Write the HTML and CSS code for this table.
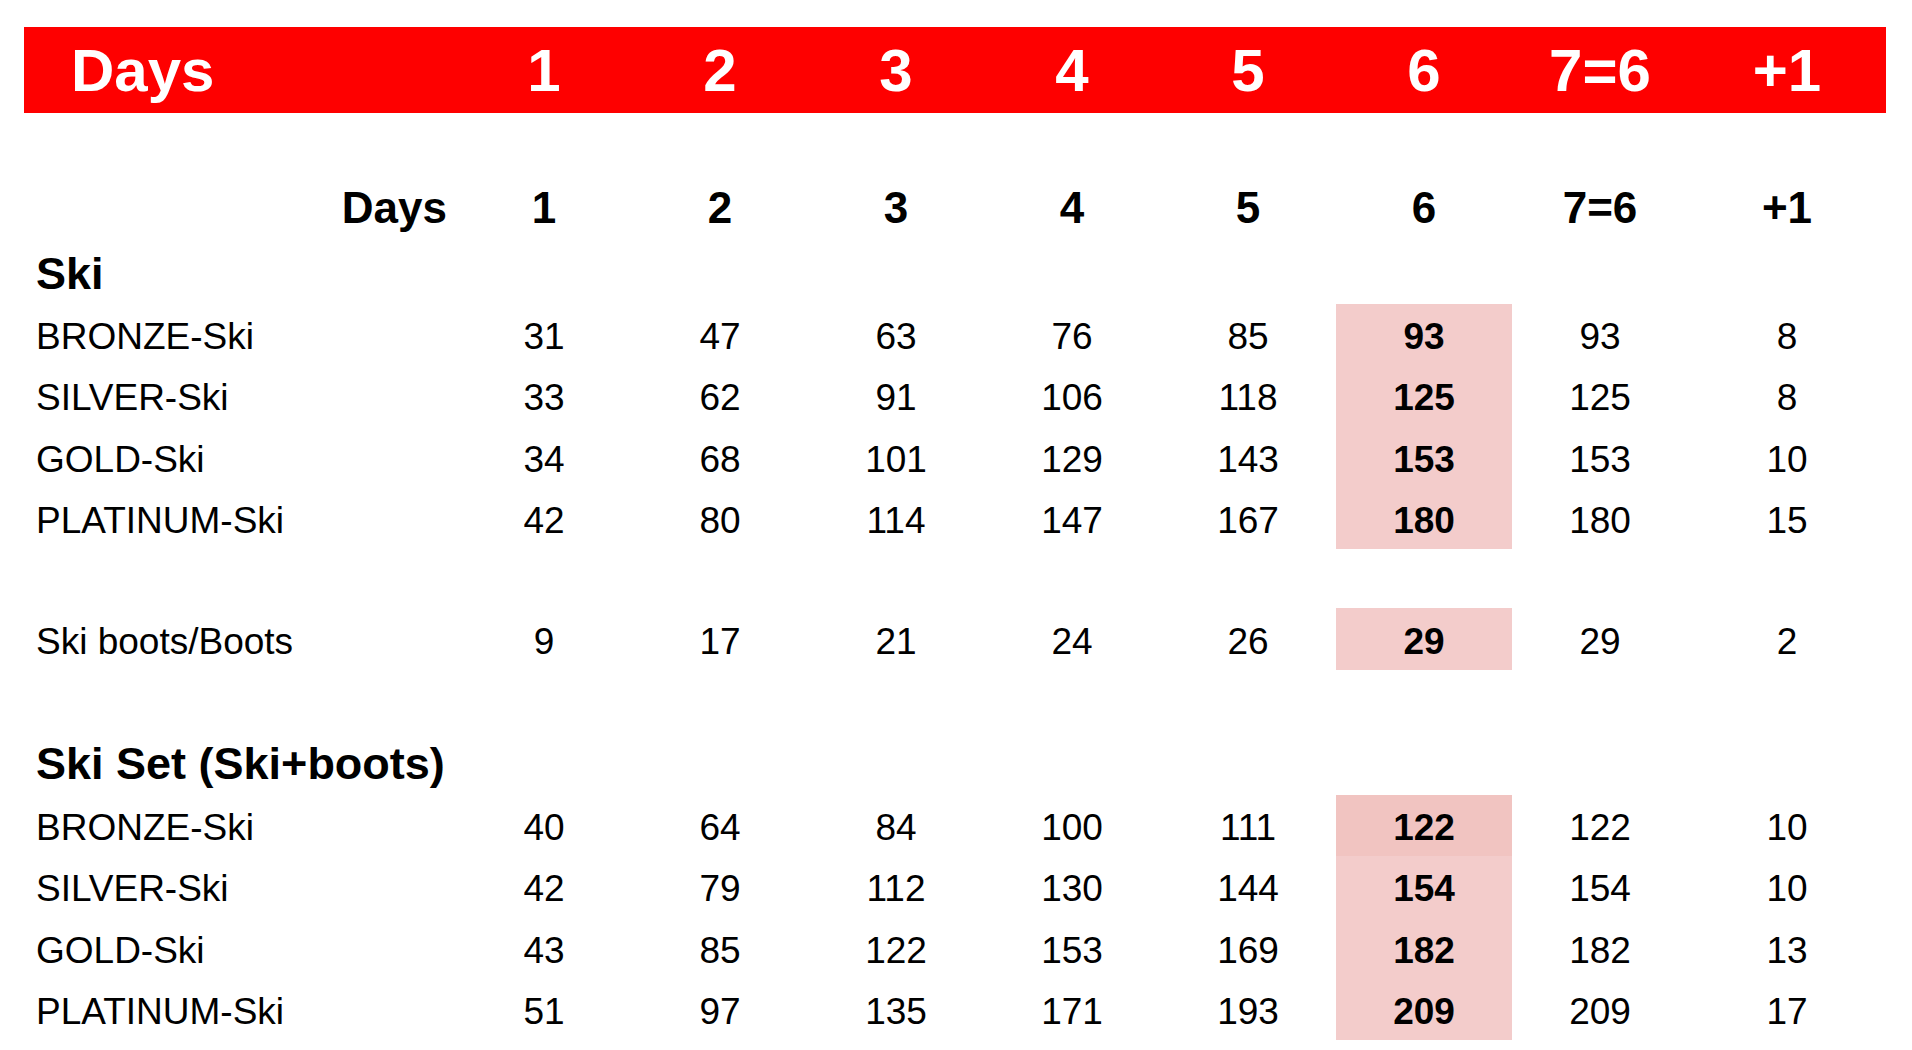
FILE: index.html
```html
<!DOCTYPE html>
<html>
<head>
<meta charset="utf-8">
<link rel="stylesheet" href="styles.css">
</head>
<body>
<div class="sheet">
  <div class="row band">
    <div class="lab">Days</div>
    <div class="n">1</div><div class="n">2</div><div class="n">3</div><div class="n">4</div><div class="n">5</div><div class="n">6</div><div class="n">7=6</div><div class="n">+1</div>
  </div>

  <div class="row head">
    <div class="lab">Days</div>
    <div class="n">1</div><div class="n">2</div><div class="n">3</div><div class="n">4</div><div class="n">5</div><div class="n">6</div><div class="n">7=6</div><div class="n">+1</div>
  </div>

  <div class="title ski-title">Ski</div>

  <div class="row data">
    <div class="lab">BRONZE-Ski</div>
    <div class="n">31</div><div class="n">47</div><div class="n">63</div><div class="n">76</div><div class="n">85</div><div class="n hl">93</div><div class="n">93</div><div class="n">8</div>
  </div>
  <div class="row data">
    <div class="lab">SILVER-Ski</div>
    <div class="n">33</div><div class="n">62</div><div class="n">91</div><div class="n">106</div><div class="n">118</div><div class="n hl">125</div><div class="n">125</div><div class="n">8</div>
  </div>
  <div class="row data">
    <div class="lab">GOLD-Ski</div>
    <div class="n">34</div><div class="n">68</div><div class="n">101</div><div class="n">129</div><div class="n">143</div><div class="n hl">153</div><div class="n">153</div><div class="n">10</div>
  </div>
  <div class="row data">
    <div class="lab">PLATINUM-Ski</div>
    <div class="n">42</div><div class="n">80</div><div class="n">114</div><div class="n">147</div><div class="n">167</div><div class="n hl">180</div><div class="n">180</div><div class="n">15</div>
  </div>

  <div class="row data boots">
    <div class="lab">Ski boots/Boots</div>
    <div class="n">9</div><div class="n">17</div><div class="n">21</div><div class="n">24</div><div class="n">26</div><div class="n hl">29</div><div class="n">29</div><div class="n">2</div>
  </div>

  <div class="title set-title">Ski Set (Ski+boots)</div>

  <div class="row data">
    <div class="lab">BRONZE-Ski</div>
    <div class="n">40</div><div class="n">64</div><div class="n">84</div><div class="n">100</div><div class="n">111</div><div class="n hl hl-dark">122</div><div class="n">122</div><div class="n">10</div>
  </div>
  <div class="row data">
    <div class="lab">SILVER-Ski</div>
    <div class="n">42</div><div class="n">79</div><div class="n">112</div><div class="n">130</div><div class="n">144</div><div class="n hl">154</div><div class="n">154</div><div class="n">10</div>
  </div>
  <div class="row data">
    <div class="lab">GOLD-Ski</div>
    <div class="n">43</div><div class="n">85</div><div class="n">122</div><div class="n">153</div><div class="n">169</div><div class="n hl">182</div><div class="n">182</div><div class="n">13</div>
  </div>
  <div class="row data">
    <div class="lab">PLATINUM-Ski</div>
    <div class="n">51</div><div class="n">97</div><div class="n">135</div><div class="n">171</div><div class="n">193</div><div class="n hl">209</div><div class="n">209</div><div class="n">17</div>
  </div>
</div>
</body>
</html>
```

FILE: styles.css
```css
html, body {
  margin: 0;
  padding: 0;
  background: #ffffff;
}

body {
  font-family: "Liberation Sans", Arial, sans-serif;
  color: #000000;
  overflow: hidden;
}

.sheet {
  display: flex;
  flex-direction: column;
  width: 1862px;
  margin-left: 24px;
  padding-top: 27px;
}

.row {
  display: grid;
  grid-template-columns: 432px repeat(7, 176px) 198px;
  align-items: stretch;
}

.row > div {
  display: flex;
  align-items: center;
  white-space: nowrap;
}

.n {
  justify-content: center;
}

.band {
  height: 86px;
  background: #fe0000;
  color: #ffffff;
  font-weight: bold;
  font-size: 60px;
}

.band .lab {
  padding-left: 47px;
}

.head {
  height: 61px;
  margin-top: 64px;
  font-weight: bold;
  font-size: 44px;
}

.head .lab {
  justify-content: flex-end;
  padding-right: 9px;
}

.title {
  display: flex;
  align-items: center;
  padding-left: 12px;
  font-weight: bold;
  font-size: 45px;
}

.ski-title {
  height: 66px;
  padding-top: 5px;
  box-sizing: border-box;
}

.set-title {
  height: 62px;
  margin-top: 63px;
}

.data {
  height: 61.25px;
  font-size: 37px;
}

.data > div {
  padding-top: 5px;
  box-sizing: border-box;
}

.data .lab {
  padding-left: 12px;
}

.boots {
  margin-top: 59px;
  height: 62px;
}

.hl {
  background: #f3cccb;
  font-weight: bold;
}

.hl-dark {
  background: #f1c4c1;
}
```
